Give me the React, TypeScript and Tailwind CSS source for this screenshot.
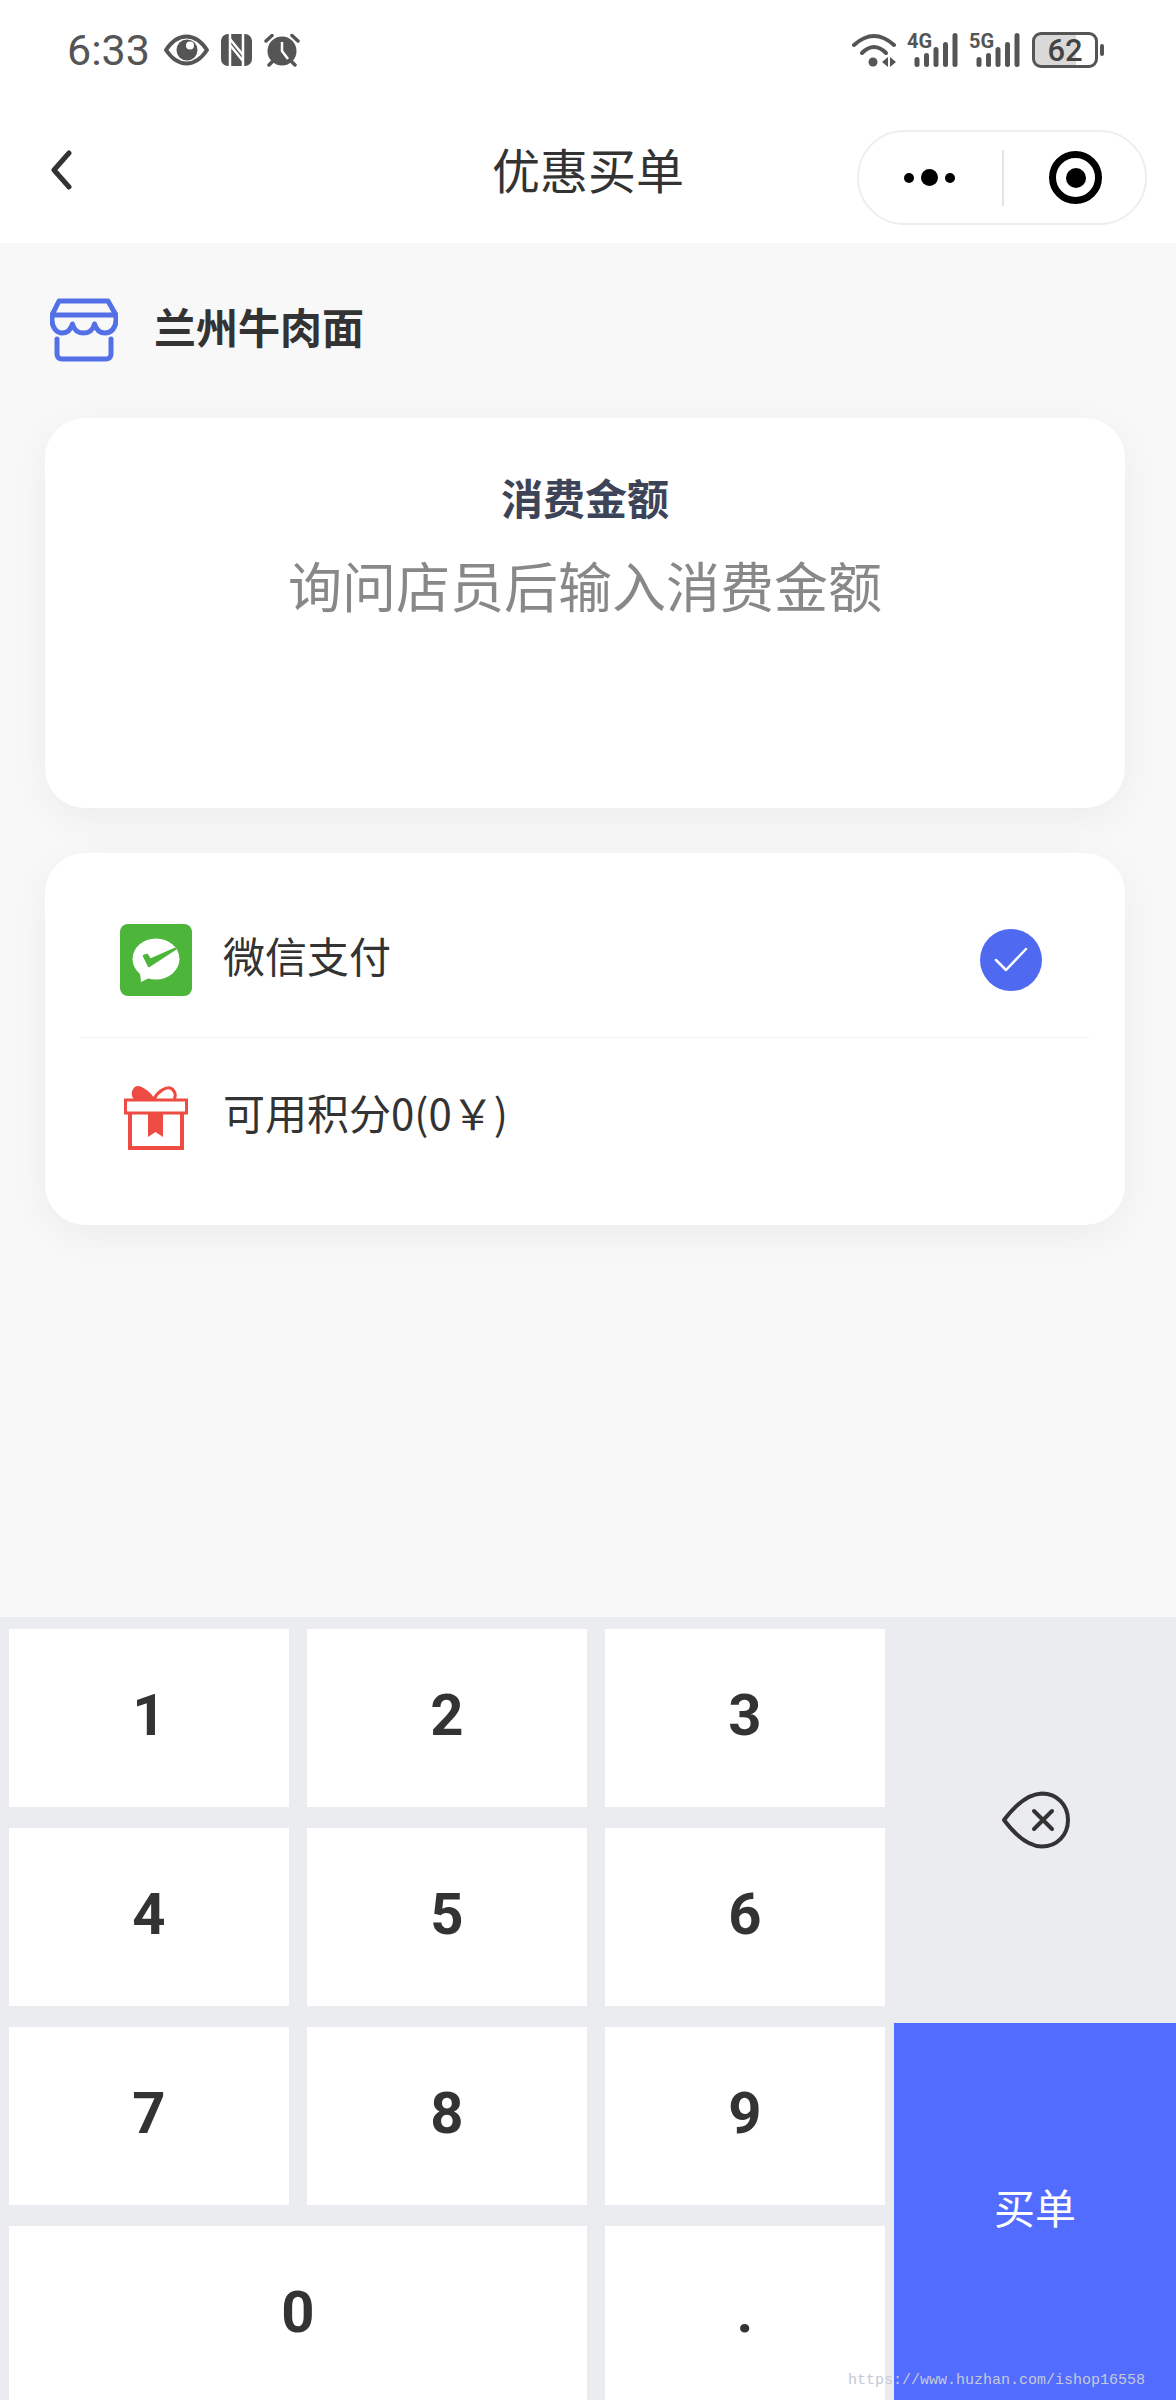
import React from 'react';

const CJK = "font-['Noto_Sans_CJK_SC','Noto_Sans',sans-serif]";

const EyeIcon = () => (
  <svg width="45" height="32" viewBox="0 0 45 32" fill="none">
    <path d="M2 16C8 7 15 2.500 22.500 2.500S37 7 43 16C37 25 30 29.500 22.500 29.500S8 25 2 16Z" stroke="#555" strokeWidth="4" strokeLinejoin="round" />
    <circle cx="23" cy="16" r="10.500" fill="#555" />
    <circle cx="26" cy="11.500" r="4" fill="#fff" />
  </svg>
);

const NfcIcon = () => (
  <svg width="31" height="32" viewBox="0 0 31 32" fill="none">
    <rect width="31" height="32" rx="7" fill="#555" />
    <path d="M9 0V32M22 0V32" stroke="#fff" strokeWidth="2.500" />
    <path d="M9 5L22 21M9 11L22 27" stroke="#fff" strokeWidth="2.500" />
  </svg>
);

const AlarmIcon = () => (
  <svg width="36" height="34" viewBox="0 0 36 34" fill="none">
    <circle cx="18" cy="18" r="14.500" fill="#555" />
    <path d="M18 9V18L24 26" stroke="#fff" strokeWidth="2.500" />
    <path d="M2 8L8 2.500M34 8L28 2.500M5 32L9 28M31 32L27 28" stroke="#555" strokeWidth="3.500" strokeLinecap="round" />
  </svg>
);

const WifiIcon = () => (
  <svg width="45" height="34" viewBox="0 0 45 34" fill="none">
    <path d="M2 12Q22 -6 42 12" stroke="#555" strokeWidth="4" strokeLinecap="round" />
    <path d="M10 20Q22 8 34 20" stroke="#555" strokeWidth="4" strokeLinecap="round" />
    <circle cx="21" cy="29" r="4.500" fill="#555" />
    <path d="M36 24V34L30 29ZM38 24V34L44 29Z" fill="#555" />
  </svg>
);

const SignalIcon = ({ label }: { label: string }) => (
  <svg width="51" height="40" viewBox="0 -6 51 40">
    <text x="0" y="15" fill="#555" fontSize="20" fontWeight="700" fontFamily="Roboto, sans-serif">
      {label}
    </text>
    <rect x="7.500" y="24" width="5" height="10" rx="2.500" fill="#555" />
    <rect x="17" y="20" width="5" height="14" rx="2.500" fill="#555" />
    <rect x="26.500" y="14" width="5" height="20" rx="2.500" fill="#555" />
    <rect x="36" y="9" width="5" height="25" rx="2.500" fill="#555" />
    <rect x="45.500" y="0" width="5" height="34" rx="2.500" fill="#555" />
  </svg>
);

const Battery = () => (
  <div className="flex items-center gap-[2px]">
    <div className="flex h-[36px] w-[66px] items-center justify-center rounded-[9px] border-[3px] border-[#555] bg-[linear-gradient(90deg,#d9d9d9_68%,#ffffff_68%)] font-['Roboto',sans-serif] text-[31px] leading-none font-medium text-[#444]">
      62
    </div>
    <div className="h-[12px] w-[4px] rounded-full bg-[#555]" />
  </div>
);

const StoreIcon = () => (
  <svg width="68" height="64" viewBox="0 0 68 64" fill="none" stroke="#5370e6" strokeWidth="5" strokeLinecap="round" strokeLinejoin="round">
    <path d="M9 3H58L66 17H2Z" />
    <path d="M2 17V22C2 30 7 35 12 35C18 35 21 31 22.500 26C24 32 28 35 33.500 35C39 35 43 32 44.500 26C46 31 49 35 55 35C61 35 66 30 66 22V17" />
    <path d="M7 41V56C7 59 9 61 12 61H56C59 61 61 59 61 56V41" />
  </svg>
);

const WechatIcon = () => (
  <svg width="72" height="72" viewBox="0 0 72 72">
    <rect width="72" height="72" rx="8" fill="#4cb53a" />
    <ellipse cx="36" cy="35" rx="23.500" ry="20.500" fill="#fff" />
    <path d="M20 49L21 58L31 53Z" fill="#fff" />
    <path d="M24 32L29 42L55 25L30 36L27 31Z" fill="#4cb53a" stroke="#4cb53a" strokeWidth="2.500" strokeLinejoin="round" />
  </svg>
);

const GiftIcon = () => (
  <svg width="64" height="64" viewBox="0 0 64 64" fill="none" stroke="#ee4b43" strokeWidth="3">
    <path d="M29 13C24 5 14 -1 11 3C8 7 9 11 12 13Z" fill="#ee4b43" />
    <path d="M30 13C34 5 42 1 46 2C50 3 53 9 50 13" />
    <rect x="1.500" y="14" width="61" height="13" />
    <path d="M6 27V62H58V27" strokeWidth="4" />
    <path d="M24 27H39V51L31.500 46L24 51Z" fill="#ee4b43" stroke="none" />
  </svg>
);

const DeleteIcon = () => (
  <svg width="70" height="60" viewBox="0 0 70 60" fill="none" stroke="#333" strokeWidth="4" strokeLinecap="round" strokeLinejoin="round">
    <path d="M3 30C12 18 25 4 41 3.500C56 3.500 67 15 67 30C67 45 56 56.500 41 56.500C25 56 12 42 3 30Z" />
    <path d="M33 21L51 39M51 21L33 39" />
  </svg>
);

const Key = ({ label, className = '' }: { label: string; className?: string }) => (
  <div className={`flex items-center justify-center bg-white pb-[6px] font-['Roboto',sans-serif] text-[58px] leading-none font-bold text-[#333] ${className}`}>
    {label}
  </div>
);

export default function App() {
  return (
    <div className={`relative flex h-[2400px] w-[1176px] flex-col overflow-hidden bg-[#f8f8f8] ${CJK}`}>
      <header className="bg-white">
        <div className="flex h-[100px] items-center justify-between pr-[72px] pl-[67px]">
          <div className="flex items-center">
            <span className="mr-[14px] font-['Roboto',sans-serif] text-[43px] leading-none text-[#555]">6:33</span>
            <EyeIcon />
            <span className="ml-[12px]"><NfcIcon /></span>
            <span className="ml-[12px]"><AlarmIcon /></span>
          </div>
          <div className="flex items-center">
            <WifiIcon />
            <span className="ml-[10px] pb-[6px]"><SignalIcon label="4G" /></span>
            <span className="ml-[11px] pb-[6px]"><SignalIcon label="5G" /></span>
            <span className="ml-[12px]"><Battery /></span>
          </div>
        </div>

        <div className="grid h-[143px] grid-cols-[1fr_auto_1fr] items-center pt-[12px]">
          <svg className="mb-[14px] ml-[49px]" width="24" height="42" viewBox="0 0 24 42" fill="none">
            <path d="M20 3L5 20L20 37" stroke="#333" strokeWidth="5" strokeLinecap="round" strokeLinejoin="round" />
          </svg>
          <h1 className="mb-[20px] text-[48px] leading-[60px] font-normal text-[#333]">优惠买单</h1>
          <div className="mr-[29px] flex h-[95px] w-[290px] items-center justify-self-end rounded-full border-2 border-[#eeeeee] bg-white">
            <div className="flex w-[143px] items-center justify-center gap-[7px] pr-[2px]">
              <span className="h-[10px] w-[10px] rounded-full bg-black" />
              <span className="h-[17px] w-[17px] rounded-full bg-black" />
              <span className="h-[10px] w-[10px] rounded-full bg-black" />
            </div>
            <div className="h-[56px] w-[2px] bg-[#e5e5e5]" />
            <div className="flex flex-1 items-center justify-center pl-[2px]">
              <div className="flex h-[53px] w-[53px] items-center justify-center rounded-full border-[7px] border-black">
                <span className="h-[20px] w-[20px] rounded-full bg-black" />
              </div>
            </div>
          </div>
        </div>
      </header>

      <main className="flex-1 pt-[55px] pr-[51px] pl-[45px]">
        <div className="ml-[5px] flex h-[64px] items-center gap-[36px]">
          <StoreIcon />
          <span className="mb-[8px] text-[42px] leading-[50px] font-bold text-[#333]">兰州牛肉面</span>
        </div>

        <section className="mt-[56px] h-[390px] rounded-[40px] bg-white pt-[54px] text-center shadow-[0_10px_40px_rgba(0,0,0,0.05)]">
          <div className="text-[42px] leading-[50px] font-bold text-[#3d4457]">消费金额</div>
          <div className="mt-[33px] text-[54px] leading-[60px] text-[#888]">询问店员后输入消费金额</div>
        </section>

        <section className="mt-[45px] h-[372px] rounded-[40px] bg-white shadow-[0_10px_40px_rgba(0,0,0,0.05)]">
          <div className="flex items-center pt-[71px] pr-[83px] pb-[41px] pl-[75px]">
            <WechatIcon />
            <span className="mb-[10px] ml-[31px] flex-1 text-[42px] leading-[50px] text-[#333]">微信支付</span>
            <div className="flex h-[62px] w-[62px] items-center justify-center rounded-full bg-[#4f69f0]">
              <svg width="36" height="28" viewBox="0 0 36 28" fill="none">
                <path d="M3 14L13 24L33 3" stroke="#fff" strokeWidth="2.500" strokeLinecap="round" strokeLinejoin="round" />
              </svg>
            </div>
          </div>
          <div className="mx-[35px] h-px bg-[#f3f3f3]" />
          <div className="flex items-center pt-[48px] pl-[79px]">
            <GiftIcon />
            <span className="mb-[12px] ml-[35px] text-[42px] leading-[50px] text-[#333]">可用积分0(0￥)</span>
          </div>
        </section>
      </main>

      <footer className="flex h-[783px] bg-[#ebecf0]">
        <div className="grid h-full grid-cols-[280px_280px_280px] auto-rows-[178px] gap-x-[18px] gap-y-[21px] pt-[12px] pl-[9px]">
          {['1', '2', '3', '4', '5', '6', '7', '8', '9'].map((n) => (
            <Key key={n} label={n} />
          ))}
          <Key label="0" className="col-span-2" />
          <Key label="." />
        </div>
        <div className="ml-[9px] flex flex-1 flex-col">
          <div className="flex h-[406px] items-center justify-center pl-[2px]">
            <DeleteIcon />
          </div>
          <div className="flex flex-1 items-center justify-center bg-[#526cff] pb-[11px] text-[41px] leading-none text-white">
            买单
          </div>
        </div>
      </footer>

      <div className="absolute right-[31px] bottom-[9px] font-['Liberation_Mono',monospace] text-[15px] leading-[20px] text-[#c6c9d6]">
        https://www.huzhan.com/ishop16558
      </div>
    </div>
  );
}
